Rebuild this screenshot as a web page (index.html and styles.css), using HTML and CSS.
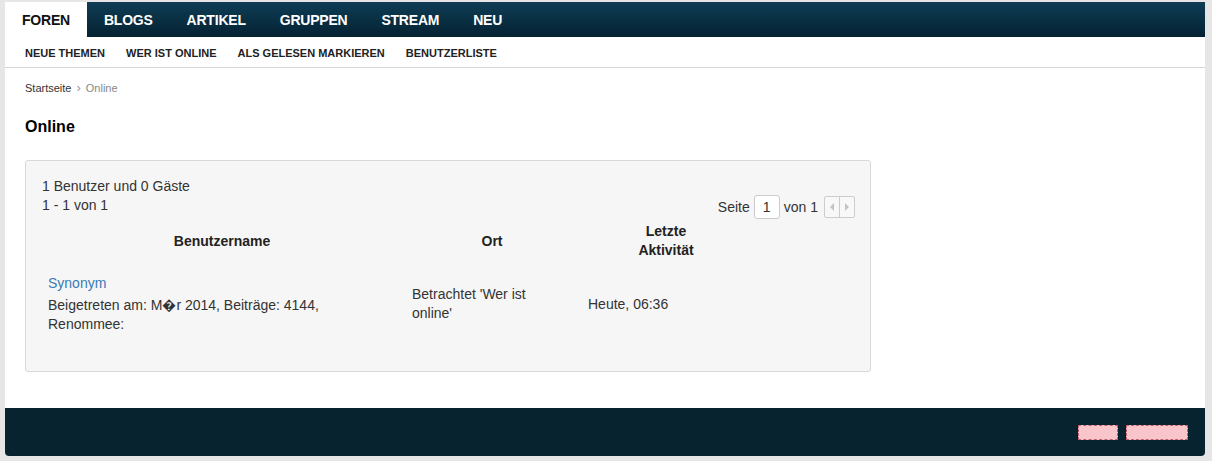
FILE: index.html
```html
<!DOCTYPE html>
<html lang="de">
<head>
<meta charset="utf-8">
<title>Online</title>
<link rel="stylesheet" href="styles.css">
</head>
<body>
<div class="wrapper">
  <nav class="mainnav">
    <a class="tab active">FOREN</a>
    <a class="tab">BLOGS</a>
    <a class="tab">ARTIKEL</a>
    <a class="tab">GRUPPEN</a>
    <a class="tab">STREAM</a>
    <a class="tab">NEU</a>
  </nav>
  <nav class="subnav">
    <a>NEUE THEMEN</a>
    <a>WER IST ONLINE</a>
    <a>ALS GELESEN MARKIEREN</a>
    <a>BENUTZERLISTE</a>
  </nav>
  <main class="content">
    <div class="breadcrumb"><a>Startseite</a><span class="sep">›</span><span class="current">Online</span></div>
    <h1 class="title">Online</h1>
    <section class="box">
      <div class="box-head">
        <div class="counts">
          <div>1 Benutzer und 0 Gäste</div>
          <div>1 - 1 von 1</div>
        </div>
        <div class="pagination">
          <span>Seite</span>
          <span class="pagebox">1</span>
          <span>von 1</span>
          <span class="arrows"><span class="arr left"></span><span class="arr right"></span></span>
        </div>
      </div>
      <table class="online">
        <thead>
          <tr>
            <th class="c1">Benutzername</th>
            <th class="c2">Ort</th>
            <th class="c3">Letzte<br>Aktivität</th>
            <th class="c4"></th>
          </tr>
        </thead>
        <tbody>
          <tr>
            <td class="c1"><a class="user">Synonym</a>Beigetreten am: M�r 2014, Beiträge: 4144,<br>Renommee:</td>
            <td class="c2">Betrachtet 'Wer ist<br>online'</td>
            <td class="c3">Heute, 06:36</td>
            <td class="c4"></td>
          </tr>
        </tbody>
      </table>
    </section>
  </main>
  <footer class="footer">
    <span class="pink p1"></span>
    <span class="pink p2"></span>
  </footer>
</div>
</body>
</html>
```

FILE: styles.css
```css
html, body {
  margin: 0;
  padding: 0;
}
body {
  background: #e6e6e6;
  font-family: "Liberation Sans", Arial, sans-serif;
  color: #333;
  padding: 2px 7px 5px 5px;
}
.wrapper {
  width: 1200px;
  background: #fff;
  border-radius: 0 0 4px 4px;
}
.mainnav {
  display: flex;
  height: 35px;
  background: linear-gradient(#0e3d55, #052232);
}
.mainnav .tab {
  display: flex;
  align-items: center;
  padding: 0 17px;
  color: #fff;
  font-weight: bold;
  font-size: 14px;
  letter-spacing: -0.22px;
}
.mainnav .tab.active {
  background: #fff;
  color: #111;
}
.subnav {
  display: flex;
  gap: 21px;
  align-items: center;
  padding: 2px 20px 0 20px;
  box-sizing: border-box;
  border-bottom: 1px solid #d6d6d6;
  height: 31px;
}
.subnav a {
  font-size: 11px;
  font-weight: bold;
  color: #222;
}
.content {
  padding: 13px 20px 36px 20px;
}
.breadcrumb {
  font-size: 11px;
  line-height: 14px;
  color: #333;
}
.breadcrumb .sep {
  color: #999;
  margin: 0 5px;
  font-size: 13px;
}
.breadcrumb .current {
  color: #888;
}
.title {
  margin: 22px 0 0 0;
  font-size: 16px;
  line-height: 20px;
  color: #000;
  font-weight: bold;
}
.box {
  margin-top: 23px;
  width: 813px;
  background: #f6f6f6;
  border: 1px solid #d9d9d9;
  border-radius: 3px;
  padding: 16px 15px 29px 16px;
  font-size: 14px;
  line-height: 19px;
}
.box-head {
  display: flex;
  justify-content: space-between;
}
.pagination {
  display: flex;
  align-items: center;
  gap: 4px;
  padding-top: 18px;
  color: #333;
}
.pagebox {
  display: inline-block;
  width: 24px;
  height: 22px;
  line-height: 22px;
  text-align: center;
  background: #fff;
  border: 1px solid #ccc;
  border-radius: 3px;
}
.arrows {
  display: flex;
  margin-left: 2px;
  border: 1px solid #ccc;
  border-radius: 2px;
  height: 20px;
  background: #f8f8f8;
}
.arr {
  width: 14px;
  display: flex;
  align-items: center;
  justify-content: center;
}
.arr.left {
  border-right: 1px solid #ccc;
}
.arr.left::before {
  content: "";
  border-style: solid;
  border-width: 4px 4px 4px 0;
  border-color: transparent #c4c4c4 transparent transparent;
}
.arr.right::before {
  content: "";
  border-style: solid;
  border-width: 4px 0 4px 4px;
  border-color: transparent transparent transparent #c4c4c4;
}
.online {
  width: 812px;
  border-collapse: collapse;
  margin-top: 0;
}
.online th {
  font-weight: bold;
  text-align: center;
  vertical-align: middle;
  padding: 3px 6px;
  color: #222;
}
.online td {
  vertical-align: middle;
  padding: 11px 6px 8px 6px;
  color: #333;
}
.online .c1 { width: 348px; }
.online .c2 { width: 168px; }
.online td.c2 { padding-left: 10px; padding-right: 2px; }
.online .c3 { width: 156px; }
.online td.c3 { text-align: left; }
.user {
  display: block;
  margin-bottom: 3px;
  color: #3a7ab3;
}
.footer {
  height: 48px;
  background: #06232f;
  border-radius: 0 0 4px 4px;
  display: flex;
  justify-content: flex-end;
  align-items: center;
  gap: 8px;
  padding-right: 17px;
}
.pink {
  display: inline-block;
  height: 13px;
  background: #f8c6ca;
  border: 1px dashed #c0606a;
}
.p1 { width: 38px; }
.p2 { width: 60px; }
```
